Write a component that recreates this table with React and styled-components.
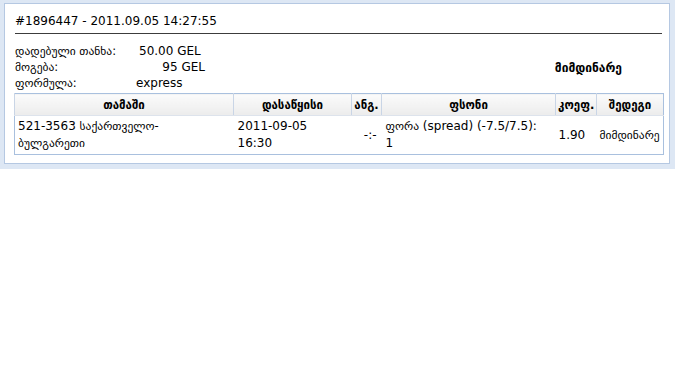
import React from 'react';
import styled, { createGlobalStyle } from 'styled-components';

const GlobalStyle = createGlobalStyle`
  body {
    margin: 0;
    background: #fff;
    font-family: "DejaVu Sans", Verdana, sans-serif;
    color: #000;
  }
`;

const Frame = styled.div`
  width: 675px;
  box-sizing: border-box;
  background: #dde7f4;
  padding: 3px 5px 5px 4px;
`;

const Panel = styled.div`
  background: #fff;
  border: 1px solid #b5c8e2;
  padding: 9px 5px 8px 10px;
`;

const Title = styled.div`
  font-size: 12px;
  line-height: 16px;
  padding-bottom: 4px;
  margin-right: 2px;
  border-bottom: 1px solid #3c3c3c;
`;

const Info = styled.div`
  display: flex;
  justify-content: space-between;
  margin-top: 9px;
`;

const InfoGrid = styled.div`
  display: grid;
  grid-template-columns: 121px 69px;
  grid-auto-rows: 16px;
  align-items: center;
`;

const Label = styled.div`
  font-size: 11.5px;
  white-space: nowrap;
`;

const Value = styled.div`
  font-size: 12px;
  white-space: nowrap;
  text-align: ${(p) => (p.$left ? 'left' : 'right')};
  padding-left: ${(p) => p.$indent || 0}px;
`;

const Status = styled.div`
  align-self: center;
  font-size: 12px;
  font-weight: bold;
  padding-right: 42px;
  padding-top: 2px;
`;

const Table = styled.table`
  margin: 2px 0 0 -1px;
  width: 649px;
  border-collapse: collapse;
  border: 1px solid #a9c0de;
  table-layout: fixed;
`;

const Th = styled.th`
  height: 21px;
  padding: 0 2px;
  font-size: 11.5px;
  font-weight: bold;
  text-align: center;
  white-space: nowrap;
  overflow: hidden;
  background: linear-gradient(#fbfbfb, #ececec);
  border-left: 1px solid #c9d5e6;
  border-bottom: 1px solid #dde3ec;
`;

const Td = styled.td`
  padding: 2px ${(p) => p.$pr || 2}px 2px ${(p) => p.$pl || 3}px;
  font-size: 12px;
  line-height: 17px;
  vertical-align: middle;
  text-align: ${(p) => p.$align || 'left'};
  white-space: nowrap;
`;

const Geo = styled.span`
  font-size: 11.5px;
`;

const columns = [
  { title: 'თამაში', width: 219 },
  { title: 'დასაწყისი', width: 118 },
  { title: 'ანგ.', width: 30 },
  { title: 'ფსონი', width: 174 },
  { title: 'კოეფ.', width: 41 },
  { title: 'შედეგი', width: 67 },
];

export default function App() {
  return (
    <>
      <GlobalStyle />
      <Frame>
        <Panel>
          <Title>#1896447 - 2011.09.05 14:27:55</Title>
          <Info>
            <InfoGrid>
              <Label>დადებული თანხა:</Label>
              <Value $left $indent={3}>50.00 GEL</Value>
              <Label>მოგება:</Label>
              <Value>95 GEL</Value>
              <Label>ფორმულა:</Label>
              <Value $left>express</Value>
            </InfoGrid>
            <Status>მიმდინარე</Status>
          </Info>
          <Table>
            <colgroup>
              {columns.map((c) => (
                <col key={c.title} style={{ width: c.width }} />
              ))}
            </colgroup>
            <thead>
              <tr>
                {columns.map((c) => (
                  <Th key={c.title}>{c.title}</Th>
                ))}
              </tr>
            </thead>
            <tbody>
              <tr>
                <Td>
                  521-3563 <Geo>საქართველო-</Geo>
                  <br />
                  <Geo>ბულგარეთი</Geo>
                </Td>
                <Td $pl={4}>
                  2011-09-05
                  <br />
                  16:30
                </Td>
                <Td $align="right" $pr={5}>
                  -:-
                </Td>
                <Td $pl={4}>
                  <Geo>ფორა</Geo> (spread) (-7.5/7.5):
                  <br />1
                </Td>
                <Td $pl={3}>1.90</Td>
                <Td $pl={3}>
                  <Geo>მიმდინარე</Geo>
                </Td>
              </tr>
            </tbody>
          </Table>
        </Panel>
      </Frame>
    </>
  );
}
